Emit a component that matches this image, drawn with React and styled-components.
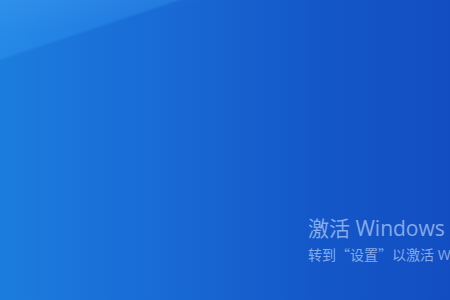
import React from 'react';
import styled, { createGlobalStyle } from 'styled-components';

const GlobalStyle = createGlobalStyle`
  html, body {
    margin: 0;
    padding: 0;
    width: 450px;
    height: 300px;
    overflow: hidden;
  }
`;

const Desktop = styled.div`
  position: relative;
  width: 450px;
  height: 300px;
  overflow: hidden;
  display: flex;
  flex-direction: column;
  padding: 214px 0 0 308px;
  box-sizing: border-box;
  background:
    linear-gradient(161.6deg, rgba(60, 165, 255, 0.38) 0, rgba(60, 165, 255, 0.26) 55px, rgba(60, 165, 255, 0) 58px),
    linear-gradient(170deg, rgba(255, 255, 255, 0.05) 0, rgba(255, 255, 255, 0) 40px),
    linear-gradient(90deg, #1c7ddd 0%, #196bd5 35%, #1457c9 70%, #124ec2 100%);
  font-family: 'Open Sans', 'Noto Sans CJK SC', sans-serif;
`;

const Watermark = styled.div`
  display: flex;
  flex-direction: column;
  white-space: nowrap;
  color: rgba(215, 230, 255, 0.6);
`;

const Title = styled.div`
  font-size: 21px;
  line-height: 28px;
`;

const Hint = styled.div`
  font-size: 14px;
  line-height: 20px;
  margin-top: 2px;
`;

const Quote = styled.span`
  font-family: 'Noto Sans CJK SC', sans-serif;
`;

export default function App() {
  return (
    <>
      <GlobalStyle />
      <Desktop>
        <Watermark>
          <Title>激活 Windows</Title>
          <Hint>
            转到<Quote>“</Quote>设置<Quote>”</Quote>以激活 Windows。
          </Hint>
        </Watermark>
      </Desktop>
    </>
  );
}
